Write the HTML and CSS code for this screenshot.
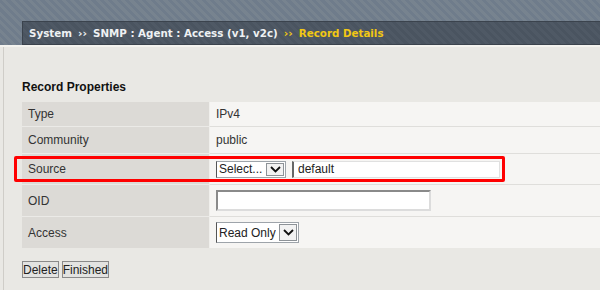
FILE: index.html
```html
<!DOCTYPE html>
<html lang="en">
<head>
    <meta charset="UTF-8">
    <title>SNMP Access Record</title>
    <link rel="stylesheet" href="styles.css">
</head>
<body>
    <header class="top">
        <div class="crumbs">
            <span>System</span>
            <span class="sep">&rsaquo;&rsaquo;</span>
            <span>SNMP : Agent : Access (v1, v2c)</span>
            <span class="sep current">&rsaquo;&rsaquo;</span>
            <span class="current">Record Details</span>
        </div>
    </header>

    <div class="page">
        <h2 class="section-title">Record Properties</h2>
        <table class="props">
            <tr class="text-row">
                <td class="label">Type</td>
                <td class="value">IPv4</td>
            </tr>
            <tr class="text-row community">
                <td class="label">Community</td>
                <td class="value">public</td>
            </tr>
            <tr class="source-row">
                <td class="label">Source<span class="highlight"></span></td>
                <td class="value">
                    <div class="source-fields">
                        <span class="select small">
                            <select><option>Select...</option></select>
                            <span class="arrow"><svg width="11" height="7" viewBox="0 0 11 7"><path d="M1 1 L5.5 5.5 L10 1" fill="none" stroke="#111" stroke-width="1.8"/></svg></span>
                        </span>
                        <input type="text" class="text-input wide" value="default">
                    </div>
                </td>
            </tr>
            <tr class="input-row">
                <td class="label">OID</td>
                <td class="value"><input type="text" class="text-input oid"></td>
            </tr>
            <tr class="input-row">
                <td class="label">Access</td>
                <td class="value">
                    <span class="select">
                        <select><option>Read Only</option></select>
                        <span class="arrow"><svg width="11" height="7" viewBox="0 0 11 7"><path d="M1 1 L5.5 5.5 L10 1" fill="none" stroke="#111" stroke-width="1.8"/></svg></span>
                    </span>
                </td>
            </tr>
        </table>

        <div class="actions">
            <button>Delete</button>
            <button>Finished</button>
        </div>
    </div>
</body>
</html>
```

FILE: styles.css
```css
body {
    margin: 0;
    padding: 0;
    background-color: #e9e8e4;
    font-family: "Liberation Sans", Arial, sans-serif;
    font-size: 12px;
    color: #333;
    overflow: hidden;
}

.top {
    padding-top: 21px;
    background: repeating-linear-gradient(45deg, #6f7c8b 0 3px, #77838f 3px 6px);
    border-bottom: 2px solid #f4f3ef;
}

.crumbs {
    margin-left: 22px;
    height: 22px;
    padding-left: 6px;
    border: 1px solid #3b434d;
    border-right: none;
    background: repeating-linear-gradient(45deg, #4a5460 0 3px, #4f5965 3px 6px);
    display: flex;
    align-items: center;
    font-family: "DejaVu Sans", Verdana, sans-serif;
    font-weight: bold;
    font-size: 10.3px;
    color: #eef1f3;
    white-space: nowrap;
}

.crumbs .sep {
    margin: 0 6px;
    font-size: 11px;
}

.crumbs .current {
    color: #f2c814;
}

.page {
    margin-left: 3px;
    border-left: 1px solid #cfcdc8;
    padding: 33px 0 20px 18px;
}

.section-title {
    margin: 0 0 8px;
    font-size: 12px;
    line-height: 14px;
    color: #111;
}

.props {
    width: 100%;
    border-collapse: collapse;
}

.props td {
    padding: 0 0 0 6px;
    vertical-align: middle;
}

.props .label {
    width: 181px;
    background-color: #dcdad6;
    border-bottom: 1px solid #ebeae7;
    border-right: 1px solid #f0efec;
}

.props .value {
    background-color: #f6f5f3;
    border-bottom: 1px solid #dfdedb;
}

.props tr:last-child td {
    border-bottom: none;
}

.text-row td {
    height: 24px;
}

.text-row.community td {
    height: 26px;
}

.source-row td {
    height: 30px;
}

.input-row td {
    height: 31px;
}

/* red annotation box around the Source row */
.source-row .label {
    position: relative;
}

.highlight {
    position: absolute;
    left: -8px;
    top: 2px;
    width: 485px;
    height: 20px;
    border: 3px solid #ff0000;
    border-radius: 2px;
}

.source-fields {
    display: flex;
    align-items: center;
    gap: 6px;
    margin-right: 100px;
}

.select {
    display: inline-flex;
    align-items: stretch;
    height: 19px;
    border: 1px solid #9ea4aa;
    border-left-color: #555;
    background: #fff;
    vertical-align: middle;
}

.select.small {
    height: 15px;
}

.select select {
    appearance: none;
    border: none;
    margin: 0;
    padding: 0 2px;
    background: #fff;
    font-family: "Liberation Sans", Arial, sans-serif;
    font-size: 12px;
    color: #222;
}

.select .arrow {
    width: 16px;
    display: flex;
    align-items: center;
    justify-content: center;
    margin: 1px;
    border: 1px solid #8d9297;
    background: #f2f2f2;
}

.text-input {
    box-sizing: border-box;
    height: 17px;
    padding: 0 4px;
    border: 1px solid #e0e0e0;
    border-left: 2px solid #666;
    background: #fff;
    font-family: "Liberation Sans", Arial, sans-serif;
    font-size: 12px;
    color: #222;
}

.text-input.wide {
    flex: 1;
}

.text-input.oid {
    width: 215px;
    height: 21px;
    border: 2px solid #dcdcdc;
    border-top-color: #8a8a8a;
    border-left-color: #8a8a8a;
}

.actions {
    margin-top: 13px;
    display: flex;
    gap: 3px;
}

.actions button {
    height: 17px;
    padding: 0;
    border: 1px solid #8a8a8a;
    border-radius: 0;
    background: #e3e3e1;
    font-family: "Liberation Sans", Arial, sans-serif;
    font-size: 12px;
    color: #222;
}
```
